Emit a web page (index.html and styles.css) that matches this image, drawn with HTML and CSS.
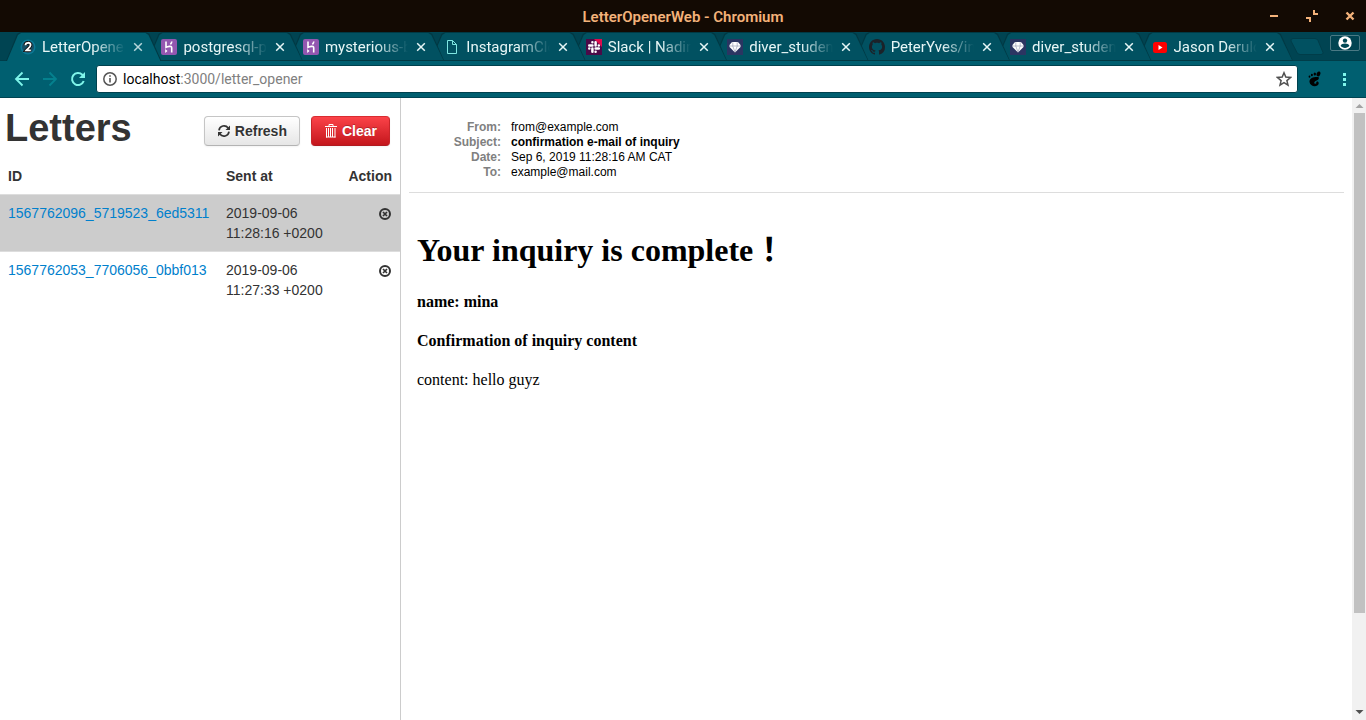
FILE: index.html
```html
<!DOCTYPE html>
<html lang="en">
<head>
<meta charset="utf-8">
<title>LetterOpenerWeb</title>
<link rel="stylesheet" href="styles.css">
</head>
<body>
<svg class="symbols" aria-hidden="true">
  <symbol id="close" viewBox="0 0 10 10"><path d="M1.2 1.2l7.6 7.6M8.8 1.2L1.2 8.8" fill="none" stroke="currentColor" stroke-width="1.5"/></symbol>
  <symbol id="heroku" viewBox="0 0 16 16"><rect width="16" height="16" rx="2" fill="#9357b0"/><path d="M5 2.500v5.900c1.500-.9 5.700-2 5.700.3v4.800M10.800 2.500c-.1 1.100-.5 1.900-1.400 2.900" fill="none" stroke="#fff" stroke-width="1.600"/><path d="M4.200 10v4L6.500 12z" fill="#fff"/></symbol>
  <symbol id="diamond" viewBox="0 0 16 16"><rect width="16" height="16" fill="#2b3562"/><path d="M5 3h6l2.500 3v2L8 13.500 2.500 8V6z" fill="#fff"/><path d="M2.500 7h11M5.800 3.200v4L8 13l2.200-5.800v-4" fill="none" stroke="#8d94ac" stroke-width=".6"/></symbol>
  <symbol id="remove" viewBox="0 0 12 12"><circle cx="6" cy="6" r="5" fill="none" stroke="#333" stroke-width="2"/><path d="M4 4l4 4M8 4L4 8" stroke="#333" stroke-width="1.700"/></symbol>
</svg>

<header class="titlebar">
  <span class="window-title">LetterOpenerWeb - Chromium</span>
  <div class="window-controls">
    <button aria-label="Minimize"><svg viewBox="0 0 12 12"><path d="M2 6h8" stroke="currentColor" stroke-width="2"/></svg></button>
    <button aria-label="Restore"><svg viewBox="0 0 12 12"><path d="M0 8h4v4M8 0v4h4" fill="none" stroke="currentColor" stroke-width="2"/></svg></button>
    <button aria-label="Close window"><svg viewBox="0 0 12 12"><path d="M2.500 2.500l7 7M9.500 2.500l-7 7" stroke="currentColor" stroke-width="2.400"/></svg></button>
  </div>
</header>

<div class="tabstrip">
  <nav class="tabs" aria-label="Open tabs">
    <div class="tab active"><svg class="favicon" viewBox="0 0 16 16"><circle cx="8" cy="8" r="7.500" fill="#0b7895"/><circle cx="8" cy="8" r="6" fill="#174f65"/><path d="M5.400 6.200C5.500 3 10.600 3 10.600 6c0 2-3 3.600-4.300 5.300h4.500" fill="none" stroke="#111" stroke-width="3.600"/><path d="M5.400 6.200C5.500 3 10.600 3 10.600 6c0 2-3 3.600-4.300 5.300h4.500" fill="none" stroke="#fff" stroke-width="1.800"/></svg><a href="#">LetterOpener</a><button aria-label="Close tab"><svg><use href="#close"/></svg></button></div>
    <div class="tab"><svg class="favicon"><use href="#heroku"/></svg><a href="#">postgresql-p</a><button aria-label="Close tab"><svg><use href="#close"/></svg></button></div>
    <div class="tab"><svg class="favicon"><use href="#heroku"/></svg><a href="#">mysterious-b</a><button aria-label="Close tab"><svg><use href="#close"/></svg></button></div>
    <div class="tab"><svg class="favicon" viewBox="0 0 16 16"><path d="M3.500 1.500h5l4 4v9h-9zM8.500 1.500v4h4" fill="none" stroke="#7fe6e2"/></svg><a href="#">InstagramClo</a><button aria-label="Close tab"><svg><use href="#close"/></svg></button></div>
    <div class="tab"><svg class="favicon" viewBox="-4 -4 32 32"><path d="M-4-4h32v32H-4z" fill="#4b0a48"/><path d="M12-4h16v16z" fill="#df0b4d"/><path d="M2.500 8.800h6.400M15.200 2.500v6.400M15.200 15.200h6.400M8.800 15.200v6.400M8.800 2.500v.1M21.500 8.800h.1M15.200 21.500v.1M2.500 15.200h.1" fill="none" stroke="#fff" stroke-width="5" stroke-linecap="round"/></svg><a href="#">Slack | Nadin</a><button aria-label="Close tab"><svg><use href="#close"/></svg></button></div>
    <div class="tab"><svg class="favicon"><use href="#diamond"/></svg><a href="#">diver_studen</a><button aria-label="Close tab"><svg><use href="#close"/></svg></button></div>
    <div class="tab"><svg class="favicon" viewBox="0 0 16 16"><path fill="#1b2229" d="M8 0C3.580 0 0 3.580 0 8c0 3.540 2.290 6.530 5.470 7.590.4.070.55-.17.55-.38 0-.19-.01-.82-.01-1.490-2.010.37-2.530-.49-2.690-.94-.09-.23-.48-.94-.82-1.130-.28-.15-.68-.52-.01-.53.63-.01 1.080.58 1.230.82.72 1.210 1.870.87 2.330.66.07-.52.28-.87.51-1.070-1.780-.2-3.640-.89-3.640-3.950 0-.87.31-1.590.82-2.150-.08-.2-.36-1.020.08-2.120 0 0 .67-.21 2.200.82.64-.18 1.320-.27 2-.27s1.360.09 2 .27c1.530-1.040 2.200-.82 2.200-.82.44 1.100.16 1.920.08 2.120.51.56.82 1.270.82 2.150 0 3.070-1.870 3.750-3.650 3.950.29.25.54.73.54 1.480 0 1.070-.01 1.930-.01 2.200 0 .21.15.46.55.38A8.010 8.010 0 0 0 16 8c0-4.420-3.580-8-8-8z"/></svg><a href="#">PeterYves/in</a><button aria-label="Close tab"><svg><use href="#close"/></svg></button></div>
    <div class="tab"><svg class="favicon"><use href="#diamond"/></svg><a href="#">diver_studen</a><button aria-label="Close tab"><svg><use href="#close"/></svg></button></div>
    <div class="tab"><svg class="favicon" viewBox="0 0 16 16"><rect x="1" y="3" width="14" height="11" rx="2.500" fill="#f00"/><path d="M6.500 6v5l4-2.500z" fill="#fff"/></svg><a href="#">Jason Derulo</a><button aria-label="Close tab"><svg><use href="#close"/></svg></button></div>
  </nav>
  <button class="new-tab" aria-label="New tab"><svg viewBox="0 0 34 17"><path d="M3 .5h22q2 0 3 2l5 12q.5 2-2 2H10q-2 0-3-2L1 3Q.5.5 3 .5z" fill="#015161" stroke="#003d49"/></svg></button>
  <button class="profile" aria-label="Profile"><svg viewBox="0 0 14 14"><circle cx="7" cy="7" r="6.700" fill="#fff"/><circle cx="7" cy="4.600" r="2.200" fill="#004855"/><path d="M2.600 9.800c1-3 7.800-3 8.800 0-2 2.800-6.800 2.800-8.800 0z" fill="#004855"/></svg></button>
</div>

<div class="toolbar">
  <button aria-label="Back"><svg viewBox="0 0 16 16"><path d="M15 8H2.500M8.500 1.500L2 8l6.500 6.500" fill="none" stroke="#7ff5ea" stroke-width="1.800"/></svg></button>
  <button aria-label="Forward"><svg viewBox="0 0 16 16"><path d="M1 8h12.500M7.500 1.500L14 8l-6.500 6.500" fill="none" stroke="#04818e" stroke-width="1.800"/></svg></button>
  <button aria-label="Reload"><svg viewBox="0 0 16 16"><path d="M13.700 10A6 6 0 1 1 12.300 3.800L14 5.500" fill="none" stroke="#7ff5ea" stroke-width="2"/><path d="M15 1v6H9z" fill="#7ff5ea"/></svg></button>
  <div class="address">
    <svg class="info" viewBox="0 0 14 14"><circle cx="7" cy="7" r="6.200" fill="none" stroke="#555" stroke-width="1.500"/><path d="M7 6v4.500M7 3.200v1.600" stroke="#555" stroke-width="1.600"/></svg>
    <a href="#" class="url"><span class="host">localhost</span>:3000/letter_opener</a>
    <button aria-label="Bookmark"><svg viewBox="0 0 16 16"><path d="M8 1.800l1.800 4.300 4.700.4-3.600 3.100 1.100 4.500L8 11.700l-4 2.400 1.100-4.500-3.600-3.100 4.700-.4z" fill="none" stroke="#505050" stroke-width="1.500"/></svg></button>
  </div>
  <button aria-label="Extension"><svg viewBox="0 0 16 16"><path d="M10.500 6C6 5.500 1 7 1.500 11c.4 5 8.500 5.500 9.200 1.500.2-1.600-1.400-2.400-2.200-1.500-.6.700.1 1.300-.5 1.600-1.200.5-2.200-.6-1.500-1.700C7.500 9.200 12 9.500 10.500 6z"/><ellipse cx="10.500" cy="2.900" rx="1.800" ry="2.500" transform="rotate(20 10.500 2.900)"/><ellipse cx="6.800" cy="3" rx="1.200" ry="1.600"/><ellipse cx="3.900" cy="4" rx="1" ry="1.300"/><ellipse cx="1.500" cy="5.700" rx=".9" ry="1.100"/></svg></button>
  <button aria-label="Menu"><svg viewBox="0 0 16 16"><path d="M7 2h3v3H7zM7 7h3v3H7zM7 12h3v3H7z" fill="#7ff5ea"/></svg></button>
</div>

<div class="page">
  <aside class="letters">
    <div class="letters-head">
      <h1>Letters</h1>
      <div class="actions">
        <button class="btn"><svg viewBox="0 0 14 14"><path d="M2 6.300C2.500 1.500 8.500.5 11.200 4M12 7.700C11.500 12.500 5.500 13.500 2.800 10" fill="none" stroke="#333" stroke-width="1.700"/><path d="M13 1.500V6H8.500zM1 12.500V8h4.500z" fill="#333"/></svg>Refresh</button>
        <button class="btn danger"><svg viewBox="0 0 14 14"><path d="M1 2.500h12M5 2.500v-2h4v2" fill="none" stroke="#fff"/><path d="M2.500 4v9.500M4.500 4v9M6.500 4v9M8.500 4v9M11 4v9.500M2 13h9.500" fill="none" stroke="#fff"/></svg>Clear</button>
      </div>
    </div>
    <table>
      <thead><tr><th class="id">ID</th><th>Sent at</th><th class="action">Action</th></tr></thead>
      <tbody>
        <tr class="selected"><td><a href="#">1567762096_5719523_6ed5311</a></td><td>2019-09-06 11:28:16 +0200</td><td class="action"><button aria-label="Delete"><svg><use href="#remove"/></svg></button></td></tr>
        <tr><td><a href="#">1567762053_7706056_0bbf013</a></td><td>2019-09-06 11:27:33 +0200</td><td class="action"><button aria-label="Delete"><svg><use href="#remove"/></svg></button></td></tr>
      </tbody>
    </table>
  </aside>
  <main class="message">
    <dl>
      <dt>From:</dt><dd>from@example.com</dd>
      <dt>Subject:</dt><dd><strong>confirmation e-mail of inquiry</strong></dd>
      <dt>Date:</dt><dd>Sep 6, 2019 11:28:16 AM CAT</dd>
      <dt>To:</dt><dd>example@mail.com</dd>
    </dl>
    <article>
      <h1>Your inquiry is complete！</h1>
      <h4>name: mina</h4>
      <h4>Confirmation of inquiry content</h4>
      <p>content: hello guyz</p>
    </article>
  </main>
  <div class="scrollbar" aria-hidden="true">
    <svg viewBox="0 0 14 15"><path d="M3.500 10h8L7.500 6z" fill="#a3a3a3"/></svg>
    <div class="track"><div class="thumb"></div></div>
    <svg viewBox="0 0 14 15"><path d="M3.500 5h8l-4 4z" fill="#505050"/></svg>
  </div>
</div>
</body>
</html>
```

FILE: styles.css
```css
* { box-sizing: border-box; }
body {
  margin: 0;
  min-height: 100vh;
  display: flex;
  flex-direction: column;
  font-family: "Liberation Sans", Arial, sans-serif;
  background: #fff;
}
button { padding: 0; border: 0; background: none; color: inherit; font: inherit; }
a { text-decoration: none; }
svg { display: block; }
.symbols { display: none; }

.titlebar {
  display: grid;
  grid-template-columns: 1fr auto 1fr;
  align-items: center;
  height: 32px;
  padding-top: 1px;
  background: #130a03;
  color: #f3b27a;
  font: 600 15px/20px Roboto, sans-serif;
}
.window-title { grid-column: 2; }
.window-controls { display: flex; justify-content: flex-end; gap: 26px; padding: 0 10px 1px 0; }
.window-controls svg { width: 12px; height: 12px; }

.tabstrip {
  display: flex;
  height: 29px;
  padding: 0 6px;
  background: #004452;
  border-bottom: 1px solid #003d49;
}
.tabs { display: flex; flex: 1; min-width: 0; padding-right: 14px; margin-bottom: -1px; }
.tab {
  position: relative;
  z-index: 1;
  display: flex;
  flex: 1 0 0;
  align-items: center;
  min-width: 0;
  height: 29px;
  margin-right: -14px;
  padding: 0 18px 0 14px;
  background: #003944;
  clip-path: polygon(0 100%, 11px 2px, 14px 0, calc(100% - 15px) 0, calc(100% - 12px) 2px, 100% 100%);
  color: #e7f6f6;
  font: 15px/20px Roboto, sans-serif;
}
.tab::before {
  content: "";
  position: absolute;
  z-index: -1;
  inset: 1px;
  background: #015161;
  clip-path: polygon(0 100%, 11px 2px, 14px 0, calc(100% - 15px) 0, calc(100% - 12px) 2px, 100% 100%);
}
.tab:nth-child(1) { z-index: 10; }
.tab:nth-child(2) { z-index: 9; }
.tab:nth-child(3) { z-index: 8; }
.tab:nth-child(4) { z-index: 7; }
.tab:nth-child(5) { z-index: 6; }
.tab:nth-child(6) { z-index: 5; }
.tab:nth-child(7) { z-index: 4; }
.tab:nth-child(8) { z-index: 3; }
.tab.active::before { background: #005f70; bottom: 0; }
.tab.active button { color: #b5d6da; }
.favicon { flex: none; width: 16px; height: 16px; }
.tab a {
  flex: 1;
  min-width: 0;
  margin: 0 8px 0 6px;
  overflow: hidden;
  color: inherit;
  white-space: nowrap;
  -webkit-mask-image: linear-gradient(to left, transparent, #000 32px);
  mask-image: linear-gradient(to left, transparent, #000 32px);
}
.tab button svg { width: 10px; height: 10px; }
.new-tab svg { width: 34px; height: 17px; }
.new-tab { margin: 0 6px 0 -3px; }
.profile {
  display: grid;
  place-items: center;
  align-self: flex-start;
  width: 30px;
  height: 16px;
  margin-top: 3px;
  border: 1px solid #4a7984;
  border-radius: 2px;
}
.profile svg { width: 14px; height: 14px; }

.toolbar {
  display: flex;
  align-items: center;
  gap: 12px;
  height: 37px;
  padding: 0 14px;
  background: #005f70;
  border-bottom: 1px solid #004452;
}
.toolbar button svg { width: 16px; height: 16px; }
.address {
  display: flex;
  flex: 1;
  align-items: center;
  gap: 6px;
  height: 28px;
  margin-left: -2px;
  margin-right: -2px;
  padding: 0 5px 0 6px;
  background: #fff;
  border: 1px solid #00414e;
  border-radius: 3px;
}
.info { width: 14px; height: 14px; }
.url { flex: 1; color: #808080; font: 14px/20px Roboto, sans-serif; }
.host { color: #000; }

.page { display: flex; flex: 1; }
.letters {
  flex: none;
  width: 401px;
  border-right: 1px solid #ccc;
  color: #333;
  font-size: 14px;
  line-height: 20px;
}
.letters-head {
  display: flex;
  align-items: flex-start;
  justify-content: space-between;
  height: 60px;
  padding: 10px 10px 0 5px;
}
.letters-head h1 { margin: 0; font-size: 38px; line-height: 40px; }
.actions { display: flex; gap: 11px; padding-top: 8px; }
.btn {
  display: flex;
  align-items: center;
  gap: 4px;
  height: 30px;
  padding: 0 12px;
  border: 1px solid #c5c5c5;
  border-bottom-color: #b3b3b3;
  border-radius: 4px;
  background: linear-gradient(#fff, #e6e6e6);
  box-shadow: 0 1px 2px rgba(0, 0, 0, .05);
  font-weight: bold;
  text-shadow: 0 1px 1px rgba(255, 255, 255, .75);
}
.btn svg { width: 14px; height: 14px; }
.btn.danger {
  border-color: #d92c31 #c9252a #b11a20;
  background: linear-gradient(#fb4349, #c4161c);
  color: #fff;
  text-shadow: 0 -1px 0 rgba(0, 0, 0, .25);
}
table { width: 100%; border-collapse: collapse; table-layout: fixed; }
th, td { padding: 8px; text-align: left; vertical-align: top; }
td { border-top: 1px solid #ddd; }
th.id { width: 218px; }
.action { width: 60px; text-align: right; white-space: nowrap; }
th.action { padding-left: 0; }
.selected { background: #ccc; }
td a { color: #0080cc; }
td button { padding-right: 1px; vertical-align: -2px; }
td svg { width: 12px; height: 12px; }

.message { flex: 1; min-width: 0; padding: 22px 8px 0; color: #000; }
dl {
  display: grid;
  grid-template-columns: 92px 1fr;
  gap: 0 10px;
  margin: 0;
  padding-bottom: 12px;
  border-bottom: 1px solid #ddd;
  font-size: 12px;
  line-height: 15px;
}
dt { color: #808080; font-weight: bold; text-align: right; }
dd { margin: 0; }
article {
  padding: 34px 8px 0;
  font-family: "Liberation Serif", "Noto Sans CJK JP", serif;
  font-size: 16px;
  line-height: 18px;
}
article h1 { margin: 0 0 20px; font-size: 32px; line-height: 46px; }
article h4, article p { margin: 0 0 21px; font-size: 16px; }

.scrollbar { display: flex; flex-direction: column; width: 14px; background: #f1f1f1; }
.scrollbar svg { width: 14px; height: 15px; }
.track { flex: 1; padding: 0 1px 0 2px; }
.thumb { height: 500px; max-height: 100%; background: #c1c1c1; }
```
